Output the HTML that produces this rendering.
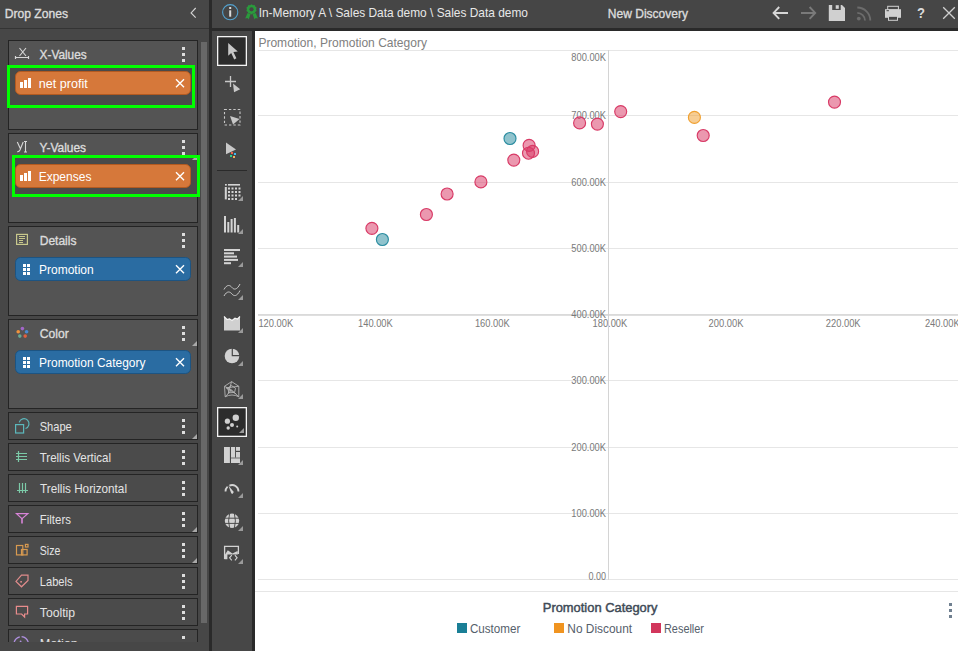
<!DOCTYPE html>
<html><head><meta charset="utf-8">
<style>
*{margin:0;padding:0}
html,body{width:958px;height:651px;overflow:hidden;background:#474747}
svg{position:absolute;left:0;top:0;display:block}
text{font-family:"Liberation Sans",sans-serif}
</style></head><body>
<svg width="958" height="651" viewBox="0 0 958 651">
<defs>
<clipPath id="lpc"><rect x="0" y="29" width="209" height="613"/></clipPath>
<clipPath id="chc"><rect x="255" y="31" width="703" height="620"/></clipPath>
</defs>
<!-- backgrounds -->
<rect x="0" y="0" width="958" height="651" fill="#474747"/>
<rect x="0" y="28" width="209" height="1" fill="#343434"/>
<rect x="209" y="0" width="3" height="651" fill="#2a2a2a"/>
<rect x="212" y="0" width="746" height="28" fill="#464646"/>
<rect x="212" y="28" width="746" height="3" fill="#2a2a2a"/>
<rect x="212" y="31" width="40" height="620" fill="#474747"/>
<rect x="252" y="31" width="3" height="620" fill="#2a2a2a"/>
<rect x="255" y="31" width="703" height="620" fill="#ffffff"/>
<!-- left header -->
<text x="4.7" y="17.8" font-size="12.3" fill="#dcdcdc" stroke="#dcdcdc" stroke-width="0.35" textLength="63.3" lengthAdjust="spacingAndGlyphs">Drop Zones</text>
<path d="M195.7 8 L191.1 12.9 L195.7 17.7" fill="none" stroke="#d4d4d4" stroke-width="1.15"/>
<!-- scrollbar -->
<rect x="201" y="42" width="6" height="581" fill="#686868"/>
<g clip-path="url(#lpc)">
<!-- boxes -->
<g stroke="#242424" stroke-width="1">
<rect x="8.5" y="40.5" width="189" height="89" fill="#545454"/>
<rect x="8.5" y="133.5" width="189" height="89" fill="#545454"/>
<rect x="8.5" y="226.5" width="189" height="89" fill="#545454"/>
<rect x="8.5" y="319.5" width="189" height="89" fill="#545454"/>
</g>
<g fill="#4b4b4b" stroke="#242424" stroke-width="1">
<rect x="8.5" y="412.5" width="189" height="27"/>
<rect x="8.5" y="443.5" width="189" height="27"/>
<rect x="8.5" y="474.5" width="189" height="27"/>
<rect x="8.5" y="505.5" width="189" height="27"/>
<rect x="8.5" y="536.5" width="189" height="27"/>
<rect x="8.5" y="567.5" width="189" height="27"/>
<rect x="8.5" y="598.5" width="189" height="27"/>
<rect x="8.5" y="629.5" width="189" height="27"/>
</g>
<!-- titles -->
<g font-size="12.3" fill="#dcdcdc" stroke="#dcdcdc" stroke-width="0.35">
<text x="39.6" y="58.6" textLength="47" lengthAdjust="spacingAndGlyphs">X-Values</text>
<text x="39.6" y="151.6" textLength="46.5" lengthAdjust="spacingAndGlyphs">Y-Values</text>
<text x="39.7" y="244.6" textLength="36.8" lengthAdjust="spacingAndGlyphs">Details</text>
<text x="39.7" y="337.6" textLength="29" lengthAdjust="spacingAndGlyphs">Color</text>
</g>
<g font-size="12.9" fill="#e4e4e4">
<text x="39.7" y="431.4" textLength="32.1" lengthAdjust="spacingAndGlyphs">Shape</text>
<text x="39.7" y="462.4" textLength="71.3" lengthAdjust="spacingAndGlyphs">Trellis Vertical</text>
<text x="40.0" y="493.4" textLength="87" lengthAdjust="spacingAndGlyphs">Trellis Horizontal</text>
<text x="39.8" y="524.4" textLength="31.1" lengthAdjust="spacingAndGlyphs">Filters</text>
<text x="39.8" y="555.4" textLength="20.5" lengthAdjust="spacingAndGlyphs">Size</text>
<text x="39.8" y="586.4" textLength="32.8" lengthAdjust="spacingAndGlyphs">Labels</text>
<text x="39.8" y="617.4" textLength="35.3" lengthAdjust="spacingAndGlyphs">Tooltip</text>
<text x="39.8" y="648.4" textLength="38" lengthAdjust="spacingAndGlyphs">Motion</text>
</g>
<!-- kebabs -->
<g fill="#dedede">
<rect x="182" y="47" width="3" height="3"/><rect x="182" y="53" width="3" height="3"/><rect x="182" y="59" width="3" height="3"/>
<rect x="182" y="140" width="3" height="3"/><rect x="182" y="146" width="3" height="3"/><rect x="182" y="152" width="3" height="3"/>
<rect x="182" y="233" width="3" height="3"/><rect x="182" y="239" width="3" height="3"/><rect x="182" y="245" width="3" height="3"/>
<rect x="182" y="326" width="3" height="3"/><rect x="182" y="332" width="3" height="3"/><rect x="182" y="338" width="3" height="3"/>
<rect x="182" y="419" width="3" height="3"/><rect x="182" y="425" width="3" height="3"/><rect x="182" y="431" width="3" height="3"/>
<rect x="182" y="450" width="3" height="3"/><rect x="182" y="456" width="3" height="3"/><rect x="182" y="462" width="3" height="3"/>
<rect x="182" y="481" width="3" height="3"/><rect x="182" y="487" width="3" height="3"/><rect x="182" y="493" width="3" height="3"/>
<rect x="182" y="512" width="3" height="3"/><rect x="182" y="518" width="3" height="3"/><rect x="182" y="524" width="3" height="3"/>
<rect x="182" y="543" width="3" height="3"/><rect x="182" y="549" width="3" height="3"/><rect x="182" y="555" width="3" height="3"/>
<rect x="182" y="574" width="3" height="3"/><rect x="182" y="580" width="3" height="3"/><rect x="182" y="586" width="3" height="3"/>
<rect x="182" y="605" width="3" height="3"/><rect x="182" y="611" width="3" height="3"/><rect x="182" y="617" width="3" height="3"/>
<rect x="182" y="636" width="3" height="3"/><rect x="182" y="642" width="3" height="3"/>
</g>
<!-- corner triangles -->
<g fill="#a8a8a8">
<path d="M197 155 V160 H192 Z"/>
<path d="M197 341 V346 H192 Z"/>
<path d="M197 434 V439 H192 Z"/>
<path d="M197 527 V532 H192 Z"/>
<path d="M197 558 V563 H192 Z"/>
</g>
<!-- green highlight areas -->
<rect x="8.5" y="66.5" width="185" height="40" fill="#4a4a4a" stroke="#00ff00" stroke-width="3"/>
<rect x="13.5" y="156.5" width="185" height="39" fill="#4a4a4a"/>
<path d="M197 155 V160 H192 Z" fill="#a8a8a8"/>
<rect x="13.5" y="156.5" width="185" height="39" fill="none" stroke="#00ff00" stroke-width="3"/>
<!-- pills -->
<rect x="15.5" y="71.5" width="175" height="23" rx="5" fill="#d6783a" stroke="#b45a20"/>
<rect x="15.5" y="164.5" width="175" height="23" rx="5" fill="#d6783a" stroke="#b45a20"/>
<rect x="15.5" y="257.5" width="175" height="23" rx="5" fill="#2a6ca2" stroke="#1d5482"/>
<rect x="15.5" y="350.5" width="175" height="23" rx="5" fill="#2a6ca2" stroke="#1d5482"/>
<g font-size="12" fill="#ffffff">
<text x="38.7" y="87.6" textLength="49" lengthAdjust="spacingAndGlyphs">net profit</text>
<text x="38.7" y="180.6">Expenses</text>
<text x="39" y="273.6">Promotion</text>
<text x="39" y="366.6" textLength="106.5" lengthAdjust="spacingAndGlyphs">Promotion Category</text>
</g>
<!-- pill icons: bars -->
<g fill="#ffffff">
<rect x="20" y="82" width="3" height="6"/><rect x="24" y="80" width="3" height="8"/><rect x="28" y="78" width="3" height="10"/>
<rect x="20" y="175" width="3" height="6"/><rect x="24" y="173" width="3" height="8"/><rect x="28" y="171" width="3" height="10"/>
</g>
<!-- pill icons: grid dots -->
<g fill="#ffffff">
<rect x="23" y="264" width="3" height="3"/><rect x="27" y="264" width="3" height="3"/>
<rect x="23" y="268" width="3" height="3"/><rect x="27" y="268" width="3" height="3"/>
<rect x="23" y="272" width="3" height="3"/><rect x="27" y="272" width="3" height="3"/>
<rect x="23" y="357" width="3" height="3"/><rect x="27" y="357" width="3" height="3"/>
<rect x="23" y="361" width="3" height="3"/><rect x="27" y="361" width="3" height="3"/>
<rect x="23" y="365" width="3" height="3"/><rect x="27" y="365" width="3" height="3"/>
</g>
<!-- pill x -->
<g stroke="#ffffff" stroke-width="1.4" fill="none">
<path d="M176 79.2 L184 87.2 M184 79.2 L176 87.2"/>
<path d="M176 172.2 L184 180.2 M184 172.2 L176 180.2"/>
<path d="M176 265.2 L184 273.2 M184 265.2 L176 273.2"/>
<path d="M176 358.2 L184 366.2 M184 358.2 L176 366.2"/>
</g>
<!-- box icons -->
<g stroke="#d8d8d8" fill="none" stroke-width="1.1">
<path d="M19.5 48 L26 56 M26 48 L19.5 56"/>
<path d="M15.5 57.5 H28.5 M15.5 56 V59 M28.5 56 V59" stroke-width="1.2"/>
<path d="M17.3 142 L20.3 148.5 M23.2 142 L20 150 Q19 152 17.3 151.6"/>
<path d="M25.5 141.5 V152 M24 141.5 H27 M24 152 H27"/>
</g>
<g stroke="#c8c88c" fill="none">
<rect x="16.6" y="234.4" width="10.8" height="10" stroke-width="1.2"/>
<path d="M19 236.5 H25 M19 238.5 H25 M19 240.5 H23 M19 242.5 H23" stroke-width="1"/>
</g>
<g>
<circle cx="22.4" cy="328.6" r="1.8" fill="#a266c8"/>
<circle cx="18.2" cy="331.8" r="1.8" fill="#f0923c"/>
<circle cx="26.6" cy="331.8" r="1.8" fill="#4a8ad2"/>
<circle cx="19.8" cy="336.1" r="1.8" fill="#6aaa94"/>
<circle cx="25.2" cy="336.1" r="1.8" fill="#e2603e"/>
</g>
<g stroke="#5cb8bc" fill="none" stroke-width="1.2">
<rect x="15.6" y="424.6" width="8" height="8.4"/>
<path d="M19.2 422.4 A5 5 0 1 1 25.5 428.5"/>
</g>
<g stroke="#7ccaa8" fill="none" stroke-width="1.2">
<path d="M18.5 451 V462 M16 453.5 H27 M16 456.5 H27 M16 459.5 H27"/>
<path d="M19.5 483 V493 M22.5 483 V493 M25.5 483 V493 M17 490.5 H28"/>
</g>
<g stroke="#d884d8" fill="none" stroke-width="1.2">
<path d="M16.5 513.6 H27.8 L22 518.6 Z"/>
<path d="M22 518.6 V523.6" stroke-width="1.6"/>
</g>
<g stroke="#d89a50" fill="none" stroke-width="1.2">
<rect x="16.5" y="545.5" width="6.3" height="9.4"/>
<rect x="21.5" y="549.5" width="5.6" height="5.4"/>
<rect x="25.4" y="544.4" width="2.6" height="2.6"/>
</g>
<g stroke="#e08c8c" fill="none" stroke-width="1.2">
<path d="M21.5 575.2 H28 V580.4 L21.5 586.8 L16 581.4 Z"/>
</g>
<rect x="20.3" y="581" width="1.6" height="1.6" fill="#e08c8c"/>
<g stroke="#e88c8c" fill="none" stroke-width="1.2">
<path d="M16.4 606.4 H27.6 V614 H24.6 V617 L21.6 614 H16.4 Z"/>
</g>
<g stroke="#b090e0" fill="none" stroke-width="1.3">
<path d="M14.2 642 A8 8 0 0 1 19.8 636.8 M21.6 636.6 A8 8 0 0 1 28.2 642"/>
</g>
<circle cx="20.6" cy="641.5" r="0.9" fill="#b090e0"/>
</g>
<rect x="0" y="642" width="209" height="9" fill="#474747"/>
<!-- top bar -->
<circle cx="230.2" cy="12.2" r="7.6" fill="none" stroke="#52a2d0" stroke-width="1.1"/>
<rect x="229.2" y="7" width="2" height="2" fill="#dcdcdc"/>
<rect x="229.2" y="10.3" width="2" height="6.4" fill="#dcdcdc"/>
<!-- ribbon -->
<g fill="#2a9a3c">
<path d="M247.6 13 L245.2 18.6 L247.5 18 L248.6 19.6 L250.6 14.2 Z"/>
<path d="M255.6 13 L258 18.6 L255.7 18 L254.6 19.6 L252.6 14.2 Z"/>
<path d="M251.5 4.2 L252.9 5.2 L254.6 5 L255.2 6.6 L256.6 7.6 L256.1 9.3 L256.6 11 L255.2 12 L254.6 13.6 L252.9 13.4 L251.5 14.4 L250.1 13.4 L248.4 13.6 L247.8 12 L246.4 11 L246.9 9.3 L246.4 7.6 L247.8 6.6 L248.4 5 L250.1 5.2 Z"/>
</g>
<circle cx="251.5" cy="9.3" r="2.1" fill="#464646"/>
<text x="258.7" y="16.8" font-size="13" fill="#e8e8e8" textLength="269.3" lengthAdjust="spacingAndGlyphs">In-Memory A \ Sales Data demo \ Sales Data demo</text>
<text x="607.8" y="17.9" font-size="12.3" fill="#dcdcdc" stroke="#dcdcdc" stroke-width="0.35" textLength="80.2" lengthAdjust="spacingAndGlyphs">New Discovery</text>
<!-- back/forward arrows -->
<g fill="none" stroke="#d6d6d6" stroke-width="1.9">
<path d="M788 13 H774.5 M779.2 7 L773.6 12.9 L779.2 18.8"/>
</g>
<g fill="none" stroke="#7a7a7a" stroke-width="1.9">
<path d="M801 13 H814.5 M809.6 7 L815.2 12.9 L809.6 18.8"/>
</g>
<!-- save -->
<path d="M828.8 5 H842 L845 8 V21 H828.8 Z" fill="#d0d0d0"/>
<rect x="832.2" y="5" width="8.5" height="5" fill="#464646"/>
<rect x="835.7" y="5.2" width="3.1" height="3.6" fill="#d0d0d0"/>
<!-- rss -->
<g fill="none" stroke="#6c6c6c" stroke-width="1.8">
<path d="M857.3 7.5 A13 13 0 0 1 870.3 20.5"/>
<path d="M857.3 12.8 A7.7 7.7 0 0 1 865 20.5"/>
</g>
<circle cx="858.8" cy="18.6" r="1.9" fill="#6c6c6c"/>
<!-- print -->
<rect x="887.7" y="6.3" width="10.7" height="3.6" fill="none" stroke="#d0d0d0" stroke-width="1"/>
<rect x="885" y="9.2" width="16" height="8.6" fill="#d0d0d0"/>
<rect x="886.5" y="10.2" width="2.4" height="1" fill="#464646"/>
<rect x="888.5" y="16.3" width="9" height="4" fill="#464646" stroke="#d0d0d0" stroke-width="1"/>
<!-- ? -->
<text x="916.9" y="18.1" font-size="14.2" font-weight="bold" fill="#dcdcdc" textLength="8" lengthAdjust="spacingAndGlyphs">?</text>
<!-- close X -->
<path d="M943.2 7.2 L954.8 18.8 M954.8 7.2 L943.2 18.8" stroke="#d0d0d0" stroke-width="1.3" fill="none"/>
<!-- toolbar -->
<rect x="217.65" y="36.65" width="28.7" height="28.7" fill="#2c2c2c" stroke="#f4f4f4" stroke-width="1.3"/>
<path d="M228.2 43 L237.8 51.6 L233.4 51.9 L236.4 58.3 L234.2 59.4 L231.2 53 L228.2 55.8 Z" fill="#c8c8c8"/>
<path d="M225 81.5 H236 M230.5 76 V87" stroke="#c8c8c8" stroke-width="1.3" fill="none"/>
<path d="M233 83.5 L240.2 89.2 L234 92.2 Z" fill="#c8c8c8"/>
<rect x="224.5" y="109.5" width="15.5" height="15.5" fill="none" stroke="#c8c8c8" stroke-width="1.1" stroke-dasharray="2.4 2"/>
<path d="M230 116 L239.6 119 L233 124.4 Z" fill="#c8c8c8"/>
<path d="M226 142.5 L236 149.5 L226 154.2 Z" fill="#c8c8c8"/>
<rect x="231" y="152" width="2" height="2" fill="#f06048"/>
<rect x="234" y="153" width="2" height="2" fill="#40b8f0"/>
<rect x="230" y="155" width="2" height="2" fill="#30d090"/>
<rect x="233" y="156" width="2" height="2" fill="#f0b060"/>
<rect x="217" y="170" width="30" height="1" fill="#2a2a2a"/>
<!-- grid -->
<g fill="#d4d4d4">
<rect x="225" y="184" width="1.8" height="1.6"/>
<rect x="228" y="184" width="12" height="1.6"/>
<rect x="224.8" y="187" width="2" height="12.4"/>
<rect x="228" y="187.5" width="2" height="2"/><rect x="231.5" y="187.5" width="2" height="2"/><rect x="235" y="187.5" width="2" height="2"/><rect x="238.5" y="187.5" width="2" height="2"/>
<rect x="228" y="191" width="2" height="2"/><rect x="231.5" y="191" width="2" height="2"/><rect x="235" y="191" width="2" height="2"/><rect x="238.5" y="191" width="2" height="2"/>
<rect x="228" y="194.5" width="2" height="2"/><rect x="231.5" y="194.5" width="2" height="2"/><rect x="235" y="194.5" width="2" height="2"/><rect x="238.5" y="194.5" width="2" height="2"/>
<rect x="228" y="198" width="2" height="2"/><rect x="231.5" y="198" width="2" height="2"/><rect x="235" y="198" width="2" height="2"/>
</g>
<!-- bars -->
<g fill="#d4d4d4">
<rect x="224" y="216" width="2" height="16.5"/>
<rect x="227.3" y="222" width="2" height="10.5"/>
<rect x="230.6" y="219" width="2" height="13.5"/>
<rect x="233.9" y="218" width="2" height="14.5"/>
<rect x="237.2" y="225" width="2" height="7.5"/>
</g>
<!-- horizontal bars -->
<g fill="#d4d4d4">
<rect x="224" y="249" width="16" height="2"/>
<rect x="224" y="252.3" width="10" height="2"/>
<rect x="224" y="255.6" width="13" height="2"/>
<rect x="224" y="258.9" width="14" height="2"/>
<rect x="224" y="262.2" width="7" height="2"/>
</g>
<!-- waves -->
<g fill="none" stroke="#c8c8c8" stroke-width="1">
<path d="M224 289.5 C227 284 230 285 232 287.5 C234 290 237 290 240 284"/>
<path d="M224 296 C227 290.5 230 291.5 232 294 C234 296.5 237 296.5 240 290.5"/>
</g>
<!-- area -->
<path d="M224 316.5 L227 319.5 L229.5 318.8 L232 320.5 L235 318.2 L237.5 319 L240 316.5 V330.5 H224 Z" fill="#d0d0d0"/>
<path d="M224 316.5 L227 319.5 L229.5 318.8 L232 320.5 L235 318.2 L237.5 319 L240 316.5" fill="none" stroke="#f4f4f4" stroke-width="1.2"/>
<!-- pie -->
<circle cx="232" cy="356" r="7.3" fill="#d2d2d2"/>
<path d="M232.3 348 V355.7 H240" fill="none" stroke="#474747" stroke-width="1.2"/>
<!-- radar -->
<g fill="none" stroke="#b4b4b4" stroke-width="0.9">
<path d="M231.6 381.6 L238.8 386.3 L238.8 396.8 Q232 393.2 225.2 396.8 L224.5 386.3 Z"/>
<path d="M231.6 381.6 L228.2 393.6 M238.8 386.3 L226 387.8 L236.2 394 M224.5 386.3 L231.6 390 L238.8 396.8 M231.6 390 L225.2 396.8"/>
<path d="M231.4 385.5 L235.5 388.2 L234.6 392.4 L229.2 392.8 L227.6 388.4 Z"/>
</g>
<!-- scatter selected -->
<rect x="217.65" y="407.65" width="28.7" height="28.7" fill="#2c2c2c" stroke="#f4f4f4" stroke-width="1.3"/>
<g fill="#cfcfcf">
<circle cx="235.8" cy="417.8" r="3.2"/>
<circle cx="227.4" cy="421.2" r="2.6"/>
<circle cx="232" cy="425" r="2"/>
<circle cx="228.2" cy="428" r="1.7"/>
<circle cx="237.2" cy="426.6" r="1"/>
</g>
<!-- treemap -->
<g fill="#d2d2d2">
<rect x="224" y="447" width="5.9" height="16"/>
<rect x="231" y="447" width="4.1" height="10.6"/>
<rect x="236" y="447" width="4" height="3.8"/>
<rect x="236" y="452" width="4" height="5.6"/>
<rect x="231" y="458.4" width="9" height="4.6"/>
</g>
<rect x="231" y="457.6" width="9" height="0.8" fill="#a8a8a8"/>
<!-- gauge -->
<path d="M225.5 491.5 A6.5 6.5 0 0 1 227.6 486.6" fill="none" stroke="#d4d4d4" stroke-width="1.8"/>
<path d="M229.4 485.6 A6.5 6.5 0 0 1 238.5 491.5" fill="none" stroke="#d4d4d4" stroke-width="1.8"/>
<path d="M228.4 485.4 L233.8 492 L232.4 494 L231.2 493.2 Z" fill="#d4d4d4"/>
<!-- globe -->
<circle cx="232" cy="520.8" r="7.2" fill="#d2d2d2"/>
<g stroke="#474747" stroke-width="0.95" fill="none">
<path d="M224.5 518.2 H239.5 M224.5 523.4 H239.5"/>
<path d="M229.6 513.6 Q227.6 520.8 229.6 528 M234.4 513.6 Q236.4 520.8 234.4 528"/>
</g>
<!-- embed -->
<path d="M224.6 559 V546.3 H238.4 V554" fill="none" stroke="#d2d2d2" stroke-width="1.3"/>
<path d="M224.4 555.5 L227.8 550.2 L232.4 553.6 L236.4 551.6 L237.8 551.2 L237.8 554.4 L227.4 554.4 L227.4 559.3 L224.4 559.3 Z" fill="#d2d2d2"/>
<path d="M231.8 555.2 L229.6 557.8 L231.8 560.4 M234.9 555.2 L237.1 557.8 L234.9 560.4" fill="none" stroke="#d2d2d2" stroke-width="1.1"/>
<!-- tool corner triangles -->
<g fill="#9a9a9a">
<path d="M243 196 V201 H238 Z"/>
<path d="M243 229 V234 H238 Z"/>
<path d="M243 262 V267 H238 Z"/>
<path d="M243 295 V300 H238 Z"/>
<path d="M243 328 V333 H238 Z"/>
<path d="M243 361 V366 H238 Z"/>
<path d="M243 394 V399 H238 Z"/>
<path d="M244 428 V433 H239 Z"/>
<path d="M243 460 V465 H238 Z"/>
<path d="M243 493 V498 H238 Z"/>
<path d="M243 526 V531 H238 Z"/>
<path d="M243 559 V564 H238 Z"/>
</g>
<!-- chart -->
<g clip-path="url(#chc)">
<text x="258.4" y="47.4" font-size="12.8" fill="#808080" textLength="168.6" lengthAdjust="spacingAndGlyphs">Promotion, Promotion Category</text>
<rect x="258" y="50" width="700" height="1" fill="#e6e6e6"/>
<rect x="258" y="115" width="700" height="1" fill="#e6e6e6"/>
<rect x="258" y="182" width="700" height="1" fill="#e6e6e6"/>
<rect x="258" y="248" width="700" height="1" fill="#e6e6e6"/>
<rect x="258" y="380" width="700" height="1" fill="#e6e6e6"/>
<rect x="258" y="447" width="700" height="1" fill="#e6e6e6"/>
<rect x="258" y="513" width="700" height="1" fill="#e6e6e6"/>
<rect x="258" y="579" width="700" height="1" fill="#e6e6e6"/>
<rect x="258" y="314.2" width="700" height="1.5" fill="#d2d2d2"/>
<text x="571.3" y="61.0" font-size="10" fill="#7a7a7a" textLength="34.7" lengthAdjust="spacingAndGlyphs">800.00K</text>
<text x="571.3" y="118.8" font-size="10" fill="#7a7a7a" textLength="34.7" lengthAdjust="spacingAndGlyphs">700.00K</text>
<text x="571.3" y="185.8" font-size="10" fill="#7a7a7a" textLength="34.7" lengthAdjust="spacingAndGlyphs">600.00K</text>
<text x="571.3" y="251.8" font-size="10" fill="#7a7a7a" textLength="34.7" lengthAdjust="spacingAndGlyphs">500.00K</text>
<text x="571.3" y="317.8" font-size="10" fill="#7a7a7a" textLength="34.7" lengthAdjust="spacingAndGlyphs">400.00K</text>
<text x="571.3" y="383.8" font-size="10" fill="#7a7a7a" textLength="34.7" lengthAdjust="spacingAndGlyphs">300.00K</text>
<text x="571.3" y="450.8" font-size="10" fill="#7a7a7a" textLength="34.7" lengthAdjust="spacingAndGlyphs">200.00K</text>
<text x="571.3" y="516.8" font-size="10" fill="#7a7a7a" textLength="34.7" lengthAdjust="spacingAndGlyphs">100.00K</text>
<text x="588.4" y="579.9" font-size="10" fill="#7a7a7a" textLength="17.6" lengthAdjust="spacingAndGlyphs">0.00</text>
<text x="258.4" y="327" font-size="10" fill="#7a7a7a" textLength="34.8" lengthAdjust="spacingAndGlyphs">120.00K</text>
<text x="358.0" y="327" font-size="10" fill="#7a7a7a" textLength="34.8" lengthAdjust="spacingAndGlyphs">140.00K</text>
<text x="474.9" y="327" font-size="10" fill="#7a7a7a" textLength="34.8" lengthAdjust="spacingAndGlyphs">160.00K</text>
<text x="592.5" y="327" font-size="10" fill="#7a7a7a" textLength="34.8" lengthAdjust="spacingAndGlyphs">180.00K</text>
<text x="708.6" y="327" font-size="10" fill="#7a7a7a" textLength="34.8" lengthAdjust="spacingAndGlyphs">200.00K</text>
<text x="825.8" y="327" font-size="10" fill="#7a7a7a" textLength="34.8" lengthAdjust="spacingAndGlyphs">220.00K</text>
<text x="924.9" y="327" font-size="10" fill="#7a7a7a" textLength="34.8" lengthAdjust="spacingAndGlyphs">240.00K</text>
<rect x="608" y="50" width="1" height="530" fill="#d4d4d4"/>
<rect x="255" y="591" width="703" height="1" fill="#e6e6e6"/>
<circle cx="382.4" cy="239.5" r="6" fill="#2a8ca0" fill-opacity="0.52" stroke="#2a8ca0" stroke-width="1.15"/>
<circle cx="510.0" cy="138.5" r="6" fill="#2a8ca0" fill-opacity="0.52" stroke="#2a8ca0" stroke-width="1.15"/>
<circle cx="694.4" cy="117.4" r="6" fill="#f0a030" fill-opacity="0.52" stroke="#f0a030" stroke-width="1.15"/>
<circle cx="371.9" cy="228.3" r="6" fill="#d83a66" fill-opacity="0.52" stroke="#d83a66" stroke-width="1.15"/>
<circle cx="426.4" cy="214.5" r="6" fill="#d83a66" fill-opacity="0.52" stroke="#d83a66" stroke-width="1.15"/>
<circle cx="447.1" cy="194" r="6" fill="#d83a66" fill-opacity="0.52" stroke="#d83a66" stroke-width="1.15"/>
<circle cx="480.9" cy="181.9" r="6" fill="#d83a66" fill-opacity="0.52" stroke="#d83a66" stroke-width="1.15"/>
<circle cx="513.8" cy="160.1" r="6" fill="#d83a66" fill-opacity="0.52" stroke="#d83a66" stroke-width="1.15"/>
<circle cx="529.1" cy="145.4" r="6" fill="#d83a66" fill-opacity="0.52" stroke="#d83a66" stroke-width="1.15"/>
<circle cx="528.5" cy="153.2" r="6" fill="#d83a66" fill-opacity="0.52" stroke="#d83a66" stroke-width="1.15"/>
<circle cx="532.6" cy="151.4" r="6" fill="#d83a66" fill-opacity="0.52" stroke="#d83a66" stroke-width="1.15"/>
<circle cx="579.6" cy="122.9" r="6" fill="#d83a66" fill-opacity="0.52" stroke="#d83a66" stroke-width="1.15"/>
<circle cx="597.4" cy="124.1" r="6" fill="#d83a66" fill-opacity="0.52" stroke="#d83a66" stroke-width="1.15"/>
<circle cx="620.7" cy="111.6" r="6" fill="#d83a66" fill-opacity="0.52" stroke="#d83a66" stroke-width="1.15"/>
<circle cx="703.2" cy="135.5" r="6" fill="#d83a66" fill-opacity="0.52" stroke="#d83a66" stroke-width="1.15"/>
<circle cx="834.5" cy="102.1" r="6" fill="#d83a66" fill-opacity="0.52" stroke="#d83a66" stroke-width="1.15"/>
<text x="542.8" y="611.9" font-size="12.6" fill="#3e4a56" stroke="#3e4a56" stroke-width="0.45" textLength="114.7" lengthAdjust="spacingAndGlyphs">Promotion Category</text>
<rect x="457" y="623" width="10" height="10" fill="#1a7f96"/>
<text x="469.9" y="632.7" font-size="12.8" fill="#55606b" textLength="50.4" lengthAdjust="spacingAndGlyphs">Customer</text>
<rect x="554" y="623" width="10" height="10" fill="#f09420"/>
<text x="567.3" y="632.7" font-size="12.8" fill="#55606b" textLength="64.8" lengthAdjust="spacingAndGlyphs">No Discount</text>
<rect x="651" y="623" width="10" height="10" fill="#d2365c"/>
<text x="664" y="632.7" font-size="12.8" fill="#55606b" textLength="40" lengthAdjust="spacingAndGlyphs">Reseller</text>
<rect x="949" y="603" width="3" height="3" fill="#708090"/>
<rect x="949" y="609" width="3" height="3" fill="#708090"/>
<rect x="949" y="615" width="3" height="3" fill="#708090"/>
</g>
</svg>
</body></html>
